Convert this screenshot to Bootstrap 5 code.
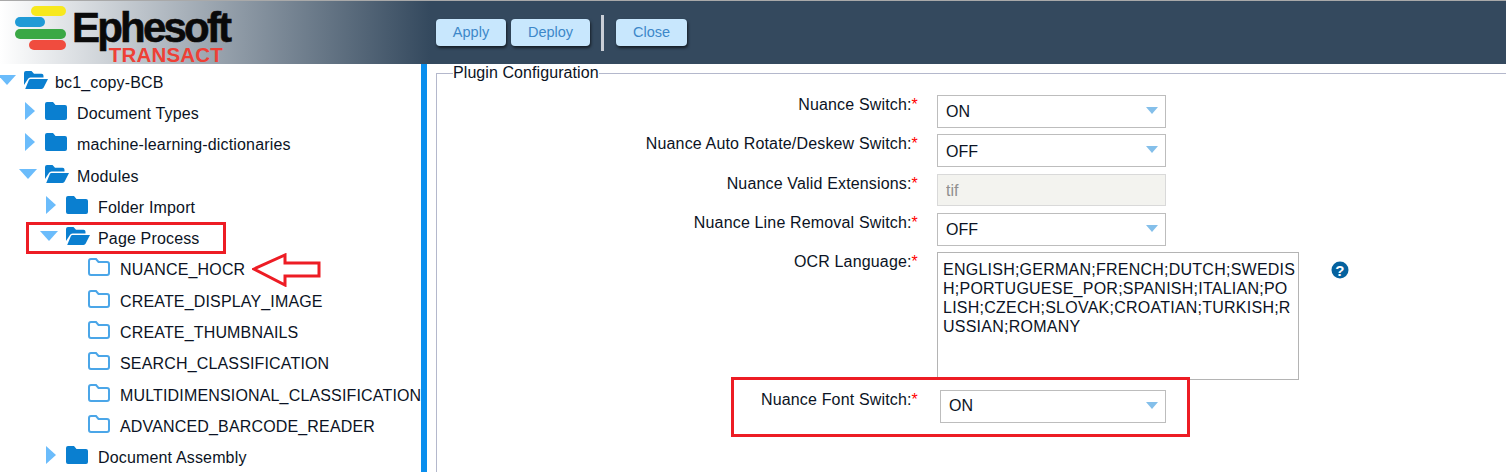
<!DOCTYPE html>
<html lang="en">
<head>
    <meta charset="UTF-8">
    <meta name="viewport" content="width=device-width, initial-scale=1.0">
    <title>Ephesoft Transact - Plugin Configuration</title>
    <link href="https://cdn.jsdelivr.net/npm/bootstrap@5.3.0/dist/css/bootstrap.min.css" rel="stylesheet">
    <style>
        body {
            height: 472px;
            overflow: hidden;
            position: relative;
            font-family: "Liberation Sans", Arial, sans-serif;
            font-size: 16px;
            letter-spacing: .16px;
            color: #0b1324;
            background: #fff;
        }
        .app-header {
            height: 64px;
            border-top: 1px solid #a9a9a9;
            background: linear-gradient(to right, #fff 0, #34495e 430px);
            background-color: #34495e;
        }
        .logo-box { width: 436px; padding-left: 15px; }
        .logo-mark { flex: none; margin-top: 5px; }
        .logo-words { margin-left: -9px; width: 151px; }
        .logo-name {
            font-size: 42px;
            font-weight: 700;
            letter-spacing: -2.8px;
            color: #0a0a0a;
            line-height: 36px;
            margin-top: 9px;
            white-space: nowrap;
            -webkit-text-stroke: .6px #0a0a0a;
        }
        .logo-sub {
            font-size: 20.5px;
            font-weight: 700;
            color: #ee4036;
            text-align: right;
            line-height: 15px;
            margin-top: 1px;
            letter-spacing: .2px;
        }
        .top-btn {
            background: #c8e7fd;
            color: #3d87c9;
            border: 0;
            border-radius: 4px;
            height: 27px;
            padding: 0;
            font-size: 14.5px;
            box-shadow: 1px 2px 3px rgba(0, 0, 0, .6);
        }
        .top-btn:hover { background: #c8e7fd; color: #3d87c9; }
        .btn-apply { width: 70px; }
        .btn-deploy { width: 79px; margin-left: 5px; }
        .btn-close-x { width: 71px; }
        .top-sep { width: 3px; height: 36px; background: #c9ced6; margin: 0 12px 0 11px; }
        .main-area { height: 408px; }
        .tree-side { width: 421px; overflow: hidden; padding-top: 3px; }
        .tree-line { height: 31.3px; white-space: nowrap; }
        .lvl0 { padding-left: 0; }
        .lvl1 { padding-left: 21px; }
        .lvl2 { padding-left: 42px; }
        .lvl3 { padding-left: 88px; }
        .tw { width: 24px; flex: none; margin-bottom: 6px; }
        .tw-open {
            width: 0; height: 0;
            margin-left: -2px;
            border-left: 9.5px solid transparent;
            border-right: 9.5px solid transparent;
            border-top: 10px solid #6bbcfb;
        }
        .tw-shut {
            width: 0; height: 0;
            margin-left: 4px;
            border-top: 9px solid transparent;
            border-bottom: 9px solid transparent;
            border-left: 10px solid #6bbcfb;
        }
        .fold-icon { flex: none; margin: 0 10px 6px 0; display: block; }
        .fold-open { margin-right: 8px; }
        .lvl0 .fold-icon { margin-right: 7px; }
        .conf-side { border-left: 6px solid #0a8fee; flex: 1; padding: 0 0 0 9px; overflow: hidden; }
        .conf-box {
            border: 1px solid #b4b8cc;
            border-right: 0;
            border-bottom: 0;
            margin: 0;
            padding: 0;
            height: 420px;
        }
        .conf-box legend {
            float: none;
            width: auto;
            font-size: 16px;
            line-height: 18px;
            letter-spacing: .08px;
            margin: 0 0 0 16px;
            padding: 0;
            color: #0b1324;
        }
        .conf-row { display: flex; align-items: flex-start; }
        .conf-label {
            width: 481px;
            flex: none;
            text-align: right;
            line-height: 18px;
            padding-top: 1px;
            color: #0b1324;
        }
        .req { color: #f00; }
        .conf-ctl { margin-left: 19px; width: 229px; flex: none; }
        .sel-wrap { position: relative; }
        .sel-wrap::after {
            content: "";
            position: absolute;
            right: 8px;
            top: 12px;
            border-left: 6px solid transparent;
            border-right: 6px solid transparent;
            border-top: 7px solid #84bfea;
        }
        .conf-select {
            background-image: none;
            border: 1px solid #bdbdbd;
            border-radius: 0;
            height: 33px;
            padding: 0 8px;
            font-size: 16px;
            color: #0b1324;
        }
        .row-b .conf-select { padding-top: 2px; }
        .row-f .conf-select { padding-bottom: 2px; }
        .conf-input {
            border: 1px solid #d9d9d9;
            border-radius: 0;
            height: 32px;
            padding: 2px 8px 0;
            font-size: 16px;
        }
        .conf-input:disabled { background: #f3f3ef; color: #8f8f8f; opacity: 1; }
        .conf-area {
            width: 362px;
            max-width: none;
            height: 128px;
            border: 1px solid #b4b4b4;
            border-radius: 0;
            padding: 7px 0 7px 5px;
            font-size: 16px;
            line-height: 19px;
            letter-spacing: .24px;
            color: #0b1324;
            resize: none;
            white-space: pre;
            overflow: hidden;
        }
        .help-dot { margin: 9px 0 0 165px; flex: none; }
        .row-a { margin-top: 13px; }
        .row-b { margin-top: 6px; }
        .row-c { margin-top: 7px; }
        .row-d { margin-top: 7px; }
        .row-e { margin-top: 6px; }
        .row-f { margin-top: 10px; }
        .row-f .conf-ctl { margin-left: 22px; width: 226px; }
        .mark-box { position: absolute; border: 3px solid #ed1c24; pointer-events: none; }
        .mark-page { left: 26px; top: 222px; width: 200px; height: 32px; }
        .mark-font { left: 731px; top: 377px; width: 459px; height: 60px; }
        .mark-arrow { position: absolute; left: 252px; top: 253px; }
    </style>
</head>
<body>
    <svg width="0" height="0" class="position-absolute">
        <symbol id="icoShut" viewBox="0 0 22 18">
            <path fill="#0a7fd0" d="M2 0h6l2.500 3H20a2 2 0 0 1 2 2v11a2 2 0 0 1-2 2H2a2 2 0 0 1-2-2V2a2 2 0 0 1 2-2z"/>
        </symbol>
        <symbol id="icoOpen" viewBox="0 0 24 18">
            <path fill="#0a7fd0" d="M0 14V2a2 2 0 0 1 2-2h5.500l2.500 2.700h7.500a2 2 0 0 1 2 2V6.500H6.500a3 3 0 0 0-2.700 1.700z"/>
            <path fill="#0a7fd0" d="M6.500 8H24l-4.300 8.500a2.500 2.500 0 0 1-2.200 1.500H1.200l3.600-8.800A2 2 0 0 1 6.500 8z"/>
        </symbol>
        <symbol id="icoLine" viewBox="0 0 22 18">
            <path fill="none" stroke="#4ba6e8" stroke-width="2" d="M3 1h5l2.500 3H19a2 2 0 0 1 2 2v9a2 2 0 0 1-2 2H3a2 2 0 0 1-2-2V3a2 2 0 0 1 2-2z"/>
        </symbol>
    </svg>

    <header class="app-header d-flex align-items-center">
        <div class="logo-box d-flex align-self-start">
            <svg class="logo-mark" width="66" height="46" viewBox="0 0 66 46">
                <rect x="16" y="0" width="35" height="10" rx="5" fill="#f7e81e"/>
                <rect x="0" y="11" width="30" height="10" rx="5" fill="#1f9ad6"/>
                <rect x="0" y="23" width="51" height="10" rx="5" fill="#3aa845"/>
                <rect x="14" y="34" width="37" height="10" rx="5" fill="#f04c3e"/>
            </svg>
            <div class="logo-words">
                <div class="logo-name">Ephesoft</div>
                <div class="logo-sub">TRANSACT</div>
            </div>
        </div>
        <div class="d-flex align-items-center">
            <button class="btn top-btn btn-apply">Apply</button>
            <button class="btn top-btn btn-deploy">Deploy</button>
            <span class="top-sep"></span>
            <button class="btn top-btn btn-close-x">Close</button>
        </div>
    </header>

    <div class="main-area d-flex">
        <nav class="tree-side" id="treeSide"></nav>
        <section class="conf-side">
            <fieldset class="conf-box">
                <legend>Plugin Configuration</legend>
                <div class="conf-row row-a">
                    <label class="conf-label">Nuance Switch:<span class="req">*</span></label>
                    <div class="conf-ctl sel-wrap"><select class="form-select conf-select"><option>ON</option><option>OFF</option></select></div>
                </div>
                <div class="conf-row row-b">
                    <label class="conf-label">Nuance Auto Rotate/Deskew Switch:<span class="req">*</span></label>
                    <div class="conf-ctl sel-wrap"><select class="form-select conf-select"><option>OFF</option><option>ON</option></select></div>
                </div>
                <div class="conf-row row-c">
                    <label class="conf-label">Nuance Valid Extensions:<span class="req">*</span></label>
                    <div class="conf-ctl"><input class="form-control conf-input" value="tif" disabled></div>
                </div>
                <div class="conf-row row-d">
                    <label class="conf-label">Nuance Line Removal Switch:<span class="req">*</span></label>
                    <div class="conf-ctl sel-wrap"><select class="form-select conf-select"><option>OFF</option><option>ON</option></select></div>
                </div>
                <div class="conf-row row-e">
                    <label class="conf-label">OCR Language:<span class="req">*</span></label>
                    <div class="conf-ctl"><textarea class="form-control conf-area">ENGLISH;GERMAN;FRENCH;DUTCH;SWEDIS
H;PORTUGUESE_POR;SPANISH;ITALIAN;PO
LISH;CZECH;SLOVAK;CROATIAN;TURKISH;R
USSIAN;ROMANY</textarea></div>
                    <svg class="help-dot" width="18" height="18" viewBox="0 0 18 18">
                        <circle cx="9" cy="9" r="8.500" fill="#05629f"/>
                        <text x="9" y="14.500" text-anchor="middle" font-family="Liberation Sans" font-weight="700" font-size="15" fill="#fff">?</text>
                    </svg>
                </div>
                <div class="conf-row row-f">
                    <label class="conf-label">Nuance Font Switch:<span class="req">*</span></label>
                    <div class="conf-ctl sel-wrap"><select class="form-select conf-select"><option>ON</option><option>OFF</option></select></div>
                </div>
            </fieldset>
        </section>
    </div>

    <div class="mark-box mark-page"></div>
    <div class="mark-box mark-font"></div>
    <svg class="mark-arrow" width="70" height="34" viewBox="0 0 70 34">
        <path fill="#fff" stroke="#ed1c24" stroke-width="3" d="M2 16 33 2v8h34v13H33v9z"/>
    </svg>

    <script src="https://cdn.jsdelivr.net/npm/bootstrap@5.3.0/dist/js/bootstrap.bundle.min.js"></script>
    <script>
        // nivel, estado del triangulo, icono, texto
        const treeRows = [
            [0, 'open', 'icoOpen', 'bc1_copy-BCB'],
            [1, 'shut', 'icoShut', 'Document Types'],
            [1, 'shut', 'icoShut', 'machine-learning-dictionaries'],
            [1, 'open', 'icoOpen', 'Modules'],
            [2, 'shut', 'icoShut', 'Folder Import'],
            [2, 'open', 'icoOpen', 'Page Process'],
            [3, '', 'icoLine', 'NUANCE_HOCR'],
            [3, '', 'icoLine', 'CREATE_DISPLAY_IMAGE'],
            [3, '', 'icoLine', 'CREATE_THUMBNAILS'],
            [3, '', 'icoLine', 'SEARCH_CLASSIFICATION'],
            [3, '', 'icoLine', 'MULTIDIMENSIONAL_CLASSIFICATION'],
            [3, '', 'icoLine', 'ADVANCED_BARCODE_READER'],
            [2, 'shut', 'icoShut', 'Document Assembly']
        ];

        document.getElementById('treeSide').innerHTML = treeRows.map(([lvl, tw, ico, label]) => {
            const open = ico === 'icoOpen';
            const toggle = tw ? `<span class="tw d-flex align-items-center"><span class="tw-${tw}"></span></span>` : '';
            return `
                <div class="tree-line d-flex align-items-center lvl${lvl}">
                    ${toggle}
                    <svg class="fold-icon ${open ? 'fold-open' : ''}" width="${open ? 24 : 22}" height="18"><use href="#${ico}"/></svg>
                    <span>${label}</span>
                </div>`;
        }).join('');
    </script>
</body>
</html>
